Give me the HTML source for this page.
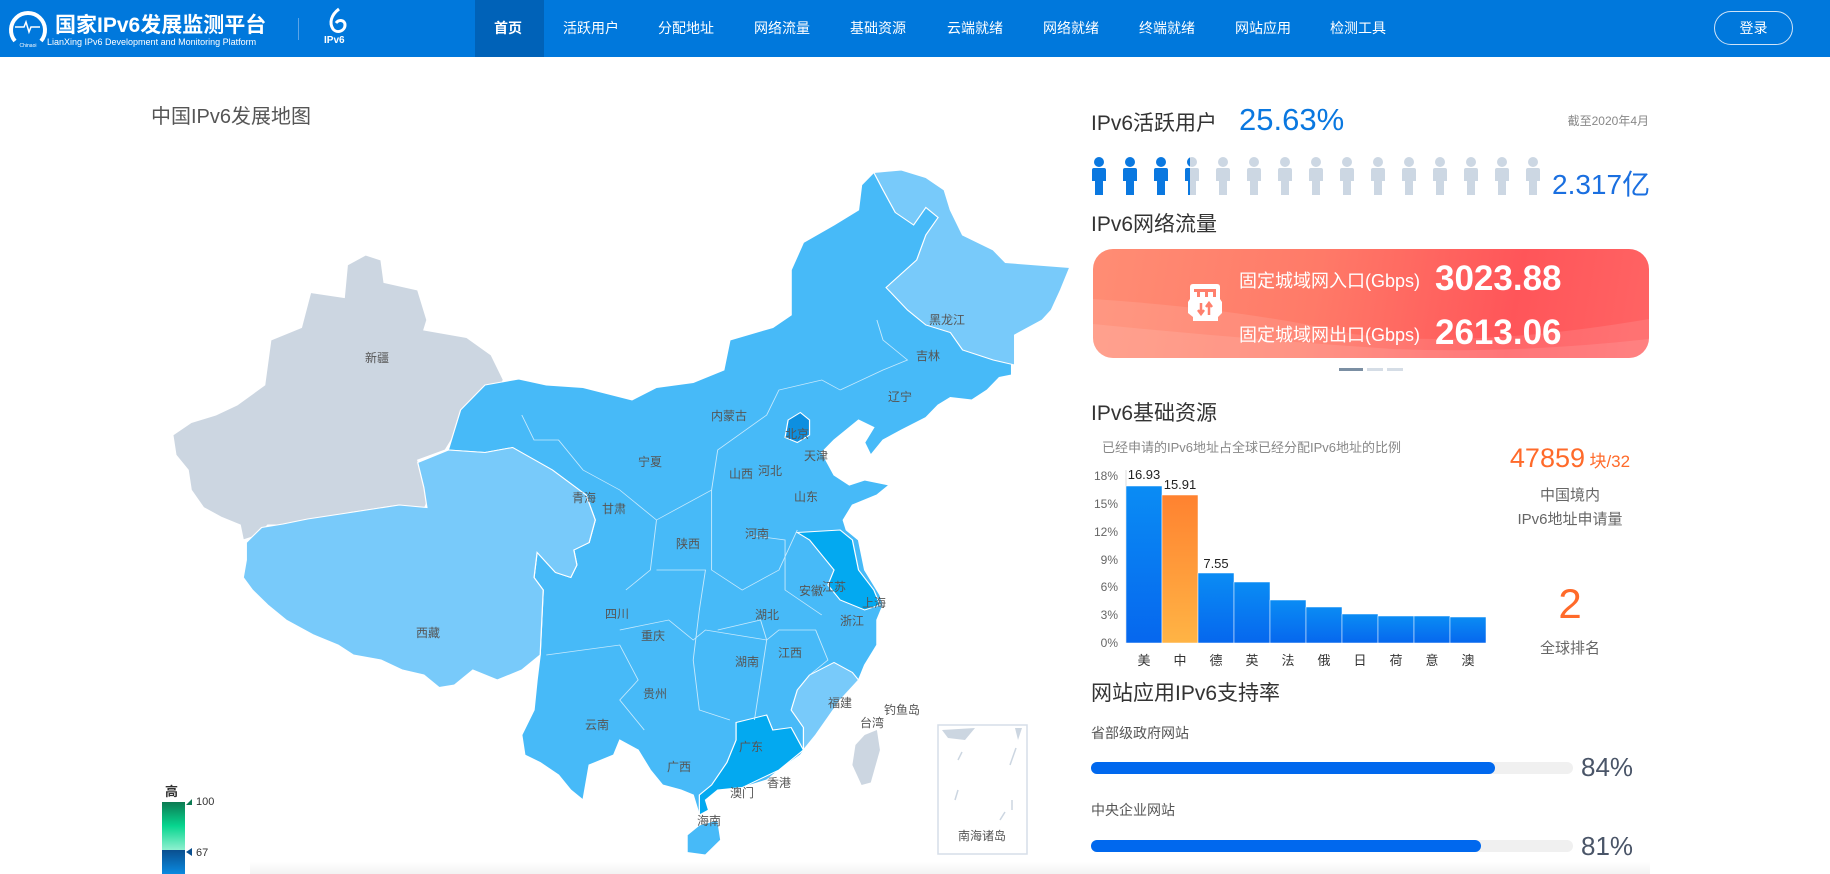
<!DOCTYPE html>
<html><head><meta charset="utf-8">
<style>
*{margin:0;padding:0;box-sizing:border-box}
body{width:1830px;height:874px;overflow:hidden;background:#fff;font-family:"Liberation Sans","Noto Sans CJK SC",sans-serif;position:relative;color:#333}
.abs{position:absolute;white-space:nowrap}
.hdr{position:absolute;left:0;top:0;width:1830px;height:57px;background:#0078dc}
.nav{position:absolute;top:0;height:57px;line-height:57px;color:#fff;font-size:14px;transform:translateX(-50%)}
.h2{font-size:21px;color:#333}
</style></head><body>
<div class="hdr"></div>
<div class="abs" style="left:475px;top:0;width:69px;height:57px;background:#0062b8"></div>
<svg class="abs" style="left:7px;top:5px" width="42" height="44" viewBox="0 0 42 44">
<path d="M8 36 A17 17 0 1 1 34 36" fill="none" stroke="#fff" stroke-width="4"/>
<path d="M8 22 H17 L19 17 L22 27 L24 22 H33" fill="none" stroke="#fff" stroke-width="1.5"/>
<text x="21" y="42" font-size="5" fill="#fff" text-anchor="middle">Chinaoi</text></svg>
<div class="abs" style="left:55px;top:9px;font-size:21px;font-weight:bold;color:#fff">国家IPv6发展监测平台</div>
<div class="abs" style="left:47px;top:37px;font-size:9px;color:#fff">LianXing IPv6 Development and Monitoring Platform</div>
<div class="abs" style="left:298px;top:18px;width:1px;height:22px;background:#5aa4e8"></div>
<svg class="abs" style="left:325px;top:7px" width="24" height="28" viewBox="0 0 24 28"><path d="M14 2 C6 8 4 16 8 22 C12 27 20 24 20 18 C20 13 14 12 11 16" fill="none" stroke="#fff" stroke-width="3"/></svg>
<div class="abs" style="left:324px;top:35px;font-size:10px;color:#fff;font-weight:bold">IPv6</div>
<div class="nav" style="left:508px;font-weight:bold">首页</div>
<div class="nav" style="left:591px">活跃用户</div>
<div class="nav" style="left:686px">分配地址</div>
<div class="nav" style="left:782px">网络流量</div>
<div class="nav" style="left:878px">基础资源</div>
<div class="nav" style="left:975px">云端就绪</div>
<div class="nav" style="left:1071px">网络就绪</div>
<div class="nav" style="left:1167px">终端就绪</div>
<div class="nav" style="left:1263px">网站应用</div>
<div class="nav" style="left:1358px">检测工具</div>
<div class="abs" style="left:1714px;top:11px;width:79px;height:34px;border:1px solid #cfe3f7;border-radius:17px;color:#fff;font-size:14px;text-align:center;line-height:32px">登录</div>

<div class="abs" style="left:151px;top:100px;font-size:20px;color:#555">中国IPv6发展地图</div>

<svg class="abs" style="left:0;top:0" width="1830" height="874">
<g transform="translate(130,90) scale(0.6122,0.5)" stroke="#fff" stroke-width="2">
<path fill="#ccd6e1" d="M70 690 100 665 140 650 175 630 220 590 230 500 280 475 295 405 350 415 355 350 385 330 410 340 415 385 470 400 485 460 480 480 550 495 590 530 610 580 600 600 575 625 545 650 525 700 515 720 470 740 480 790 490 810 480 840 440 830 360 845 325 855 285 860 250 870 225 870 210 890 185 900 180 870 150 855 120 835 100 800 95 760 75 730Z"/>
<path fill="#47baf8" d="M520 720 540 640 580 590 635 578 680 590 740 595 820 620 860 595 920 585 970 560 980 500 1050 475 1080 450 1080 360 1100 305 1150 270 1190 240 1195 190 1215 165 1260 160 1300 175 1330 200 1340 240 1360 290 1410 320 1430 345 1535 355 1520 400 1505 440 1490 460 1445 490 1440 540 1440 570 1420 575 1400 600 1375 620 1340 615 1320 630 1300 655 1260 680 1230 700 1210 730 1200 705 1215 675 1190 660 1170 680 1150 700 1130 725 1150 770 1175 790 1200 780 1240 790 1220 810 1180 830 1165 860 1170 880 1190 900 1200 960 1225 1010 1230 1030 1220 1060 1220 1110 1200 1150 1190 1180 1160 1220 1120 1290 1095 1330 1060 1360 1040 1380 1000 1395 960 1400 940 1420 945 1440 930 1450 920 1410 900 1400 870 1390 850 1360 830 1320 800 1300 790 1330 750 1350 740 1420 720 1400 700 1370 670 1345 645 1330 640 1290 660 1240 665 1180 670 1130 675 1000 660 975 665 925 695 965 720 975 730 950 725 920 750 905 760 860 745 810 690 760 625 715 580 725Z"/>
<path fill="#78cafa" d="M190 905 215 875 250 868 290 858 360 845 440 830 485 835 480 795 470 745 520 720 580 725 625 715 690 760 745 810 760 860 750 905 725 920 730 950 720 975 695 965 665 925 660 975 675 1000 670 1130 640 1160 600 1180 560 1160 530 1190 505 1195 480 1170 445 1160 410 1140 365 1130 340 1110 300 1090 255 1060 225 1030 200 1000 185 975 190 940Z"/>
<path fill="#78cafa" d="M1215 165 1260 160 1300 175 1330 200 1340 240 1360 290 1410 320 1430 345 1535 355 1520 400 1505 440 1490 460 1445 490 1445 550 1410 540 1360 520 1340 485 1300 470 1270 440 1235 395 1285 340 1300 290 1320 255 1300 235 1280 270 1250 245 1230 200Z"/>
<path fill="#78cafa" d="M1110 1170 1150 1145 1180 1165 1190 1180 1160 1220 1120 1290 1100 1320 1100 1275 1080 1240 1090 1200Z"/>
<path fill="#03a9f0" d="M990 1265 1040 1250 1050 1280 1080 1275 1100 1320 1060 1360 1000 1395 960 1400 940 1420 945 1440 930 1450 930 1410 950 1390 975 1345 990 1300Z"/>
<path fill="#03a9f0" d="M1090 885 1160 880 1180 900 1190 960 1215 1000 1225 1030 1200 1040 1160 1020 1140 990 1150 960 1130 930 1110 900Z"/>
<path fill="#0d8fe0" d="M1075 660 1095 645 1110 660 1110 690 1090 705 1070 695Z"/>
<path fill="#47baf8" d="M910 1490 930 1470 960 1460 965 1500 940 1530 910 1525Z"/>
<path fill="#ccd6e1" stroke="none" d="M1200 1290 1220 1280 1225 1320 1210 1385 1195 1390 1180 1350 1185 1310Z"/>
<g fill="none" stroke="#e6f5fe" stroke-width="1.5" opacity="0.8">
<path d="M640 650 660 700 700 700 740 760 800 800 860 860 850 960 810 1000"/>
<path d="M860 860 950 800 960 720 1040 650 1060 600 1130 580 1160 600"/>
<path d="M950 800 950 960 1000 1000 1060 960 1090 880"/>
<path d="M860 960 940 960 930 1040 920 1140 930 1240 980 1260"/>
<path d="M1040 1100 1060 1080 1120 1080 1140 1140 1110 1170"/>
<path d="M800 1080 880 1060 920 1100 940 1080 1040 1100"/>
<path d="M680 1130 800 1110 830 1180 800 1220 840 1280"/>
<path d="M1130 1050 1070 1000 1070 900 1010 890"/>
<path d="M1020 1260 1040 1100 1030 1060 960 1080"/>
<path d="M1160 600 1230 560 1270 540 1230 500 1220 460"/>
</g>
</g>
<rect x="938" y="725" width="89" height="129" fill="none" stroke="#d5dee8" stroke-width="1.5"/>
<path d="M942 730 L975 728 L965 740 L948 738Z M1015 728 L1022 728 L1018 740Z" fill="#ccd6e1"/>
<g stroke="#ccd6e1" stroke-width="1.5"><line x1="958" y1="760" x2="962" y2="752"/><line x1="1010" y1="765" x2="1016" y2="748"/><line x1="955" y1="800" x2="958" y2="790"/><line x1="1012" y1="810" x2="1012" y2="800"/><line x1="1000" y1="820" x2="1005" y2="812"/></g>
<g font-size="12" fill="#555" text-anchor="middle" font-family="Liberation Sans,Noto Sans CJK SC,sans-serif">
<text x="377" y="362">新疆</text><text x="428" y="637">西藏</text><text x="584" y="502">青海</text><text x="614" y="513">甘肃</text><text x="650" y="466">宁夏</text><text x="729" y="420">内蒙古</text><text x="797" y="438">北京</text><text x="816" y="460">天津</text><text x="741" y="478">山西</text><text x="770" y="475">河北</text><text x="806" y="501">山东</text><text x="757" y="538">河南</text><text x="688" y="548">陕西</text><text x="834" y="591">江苏</text><text x="811" y="595">安徽</text><text x="874" y="607">上海</text><text x="852" y="625">浙江</text><text x="767" y="619">湖北</text><text x="617" y="618">四川</text><text x="653" y="640">重庆</text><text x="747" y="666">湖南</text><text x="790" y="657">江西</text><text x="655" y="698">贵州</text><text x="597" y="729">云南</text><text x="679" y="771">广西</text><text x="751" y="751">广东</text><text x="840" y="707">福建</text><text x="872" y="727">台湾</text><text x="902" y="714">钓鱼岛</text><text x="779" y="787">香港</text><text x="742" y="797">澳门</text><text x="709" y="825">海南</text><text x="947" y="324">黑龙江</text><text x="928" y="360">吉林</text><text x="900" y="401">辽宁</text><text x="982" y="840">南海诸岛</text>
</g>
<defs><linearGradient id="lg" x1="0" y1="0" x2="0" y2="1"><stop offset="0" stop-color="#0c7a52"/><stop offset="0.5" stop-color="#07d68f"/><stop offset="1" stop-color="#8ff0d0"/></linearGradient>
<linearGradient id="lb" x1="0" y1="0" x2="0" y2="1"><stop offset="0" stop-color="#0a4f8f"/><stop offset="1" stop-color="#0a8ae0"/></linearGradient></defs>
<rect x="162" y="802" width="23" height="48" fill="url(#lg)"/>
<rect x="162" y="850" width="23" height="24" fill="url(#lb)"/>
<text x="165" y="796" font-size="13" font-weight="bold" fill="#333">高</text>
<path d="M186 805 L192 799 L192 805Z" fill="#0c7a52"/><text x="196" y="805" font-size="11" fill="#333">100</text>
<path d="M186 852 L192 848 L192 856Z" fill="#0a4f8f"/><text x="196" y="856" font-size="11" fill="#333">67</text>
</svg>

<!-- right panel -->
<div class="abs h2" style="left:1091px;top:107px">IPv6活跃用户</div>
<div class="abs" style="left:1239px;top:102px;font-size:31px;color:#0a78e0">25.63%</div>
<div class="abs" style="left:1545px;top:112px;font-size:12px;color:#888;width:104px;text-align:right">截至2020年4月</div>
<svg class="abs" style="left:1091px;top:156px" width="470" height="42">
<defs><clipPath id="half"><rect x="0" y="0" width="6" height="42"/></clipPath>
<g id="p"><circle cx="8" cy="6" r="5"/><path d="M1 14 Q1 12 3 12 H13 Q15 12 15 14 V25 H12 V39 H4 V25 H1Z"/></g></defs>
<g fill="#0a78e0"><use href="#p" x="0"/><use href="#p" x="31"/><use href="#p" x="62"/></g>
<g fill="#ccd7e3"><use href="#p" x="93"/><use href="#p" x="124"/><use href="#p" x="155"/><use href="#p" x="186"/><use href="#p" x="217"/><use href="#p" x="248"/><use href="#p" x="279"/><use href="#p" x="310"/><use href="#p" x="341"/><use href="#p" x="372"/><use href="#p" x="403"/><use href="#p" x="434"/></g>
<g fill="#0a78e0" clip-path="url(#half)" transform="translate(93,0)"><use href="#p"/></g>
</svg>
<div class="abs" style="left:1552px;top:163px;font-size:28px;color:#1a6fe0">2.317亿</div>
<div class="abs h2" style="left:1091px;top:208px">IPv6网络流量</div>
<div class="abs" style="left:1093px;top:249px;width:556px;height:109px;border-radius:20px;background:linear-gradient(100deg,#ff8d74 0%,#ff7a68 40%,#ff5559 75%,#ff6464 100%);overflow:hidden">
<svg width="556" height="109" style="position:absolute;left:0;top:0"><path d="M0 50 Q150 60 260 85 Q380 100 556 70 V109 H0Z" fill="#fff" opacity="0.1"/><path d="M0 75 Q150 90 300 100 Q420 105 556 90 V109 H0Z" fill="#fff" opacity="0.1"/></svg>
</div>
<svg class="abs" style="left:1187px;top:283px" width="36" height="40" viewBox="0 0 36 40">
<path d="M3 4 Q3 1 6 1 H30 Q33 1 33 4 V16 L35 19 V30 L31 34 V38 H6 V34 L1 30 V19 L3 16Z" fill="#fff"/>
<path d="M7 6 H29 V14 H26 V9 H21 V14 H18 V9 H13 V14 H10 V9 H7Z" fill="#ff806d"/>
<path d="M14 20 V30 M11 27 L14 31 L17 27 M22 32 V21 M19 24 L22 20 L25 24" stroke="#ff806d" stroke-width="2.5" fill="none"/></svg>
<div class="abs" style="left:1239px;top:267px;font-size:18px;color:#fff">固定城域网入口(Gbps)</div>
<div class="abs" style="left:1435px;top:259px;font-size:35px;font-weight:bold;color:#fff">3023.88</div>
<div class="abs" style="left:1239px;top:321px;font-size:18px;color:#fff">固定城域网出口(Gbps)</div>
<div class="abs" style="left:1435px;top:313px;font-size:35px;font-weight:bold;color:#fff">2613.06</div>
<div class="abs" style="left:1339px;top:368px;width:24px;height:3px;background:#7b8fa3"></div>
<div class="abs" style="left:1367px;top:368px;width:16px;height:3px;background:#d5dde6"></div>
<div class="abs" style="left:1387px;top:368px;width:16px;height:3px;background:#d5dde6"></div>

<div class="abs h2" style="left:1091px;top:397px">IPv6基础资源</div>
<div class="abs" style="left:1102px;top:437px;font-size:13px;color:#888">已经申请的IPv6地址占全球已经分配IPv6地址的比例</div>
<svg class="abs" style="left:1090px;top:460px" width="420" height="220" font-family="Liberation Sans,Noto Sans CJK SC,sans-serif">
<defs><linearGradient id="bb" x1="0" y1="0" x2="0" y2="1"><stop offset="0" stop-color="#0a8cf4"/><stop offset="1" stop-color="#0667ee"/></linearGradient>
<linearGradient id="bo" x1="0" y1="0" x2="0" y2="1"><stop offset="0" stop-color="#ff8230"/><stop offset="1" stop-color="#ffb445"/></linearGradient></defs>
<g font-size="12" fill="#666" text-anchor="end"><text x="28" y="20">18%</text><text x="28" y="48">15%</text><text x="28" y="76">12%</text><text x="28" y="104">9%</text><text x="28" y="131">6%</text><text x="28" y="159">3%</text><text x="28" y="187">0%</text></g>
<line x1="36" y1="10" x2="36" y2="183" stroke="#ddd"/>
<g stroke="#fff" stroke-width="0.5">
<rect x="36" y="26" width="36" height="157" fill="url(#bb)"/>
<rect x="72" y="35" width="36" height="148" fill="url(#bo)"/>
<rect x="108" y="113" width="36" height="70" fill="url(#bb)"/>
<rect x="144" y="122" width="36" height="61" fill="url(#bb)"/>
<rect x="180" y="140" width="36" height="43" fill="url(#bb)"/>
<rect x="216" y="147" width="36" height="36" fill="url(#bb)"/>
<rect x="252" y="154" width="36" height="29" fill="url(#bb)"/>
<rect x="288" y="156" width="36" height="27" fill="url(#bb)"/>
<rect x="324" y="156" width="36" height="27" fill="url(#bb)"/>
<rect x="360" y="157" width="36" height="26" fill="url(#bb)"/>
</g>
<g font-size="13" fill="#222" text-anchor="middle"><text x="54" y="19">16.93</text><text x="90" y="29">15.91</text><text x="126" y="108">7.55</text></g>
<g font-size="13" fill="#333" text-anchor="middle"><text x="54" y="205">美</text><text x="90" y="205">中</text><text x="126" y="205">德</text><text x="162" y="205">英</text><text x="198" y="205">法</text><text x="234" y="205">俄</text><text x="270" y="205">日</text><text x="306" y="205">荷</text><text x="342" y="205">意</text><text x="378" y="205">澳</text></g>
</svg>
<div class="abs" style="left:1500px;top:443px;width:140px;text-align:center;color:#ff6a2a"><span style="font-size:27px">47859</span> <span style="font-size:17px">块/32</span></div>
<div class="abs" style="left:1500px;top:484px;width:140px;text-align:center;font-size:15px;color:#666;line-height:24px">中国境内<br>IPv6地址申请量</div>
<div class="abs" style="left:1500px;top:580px;width:140px;text-align:center;font-size:42px;color:#ff6a2a">2</div>
<div class="abs" style="left:1500px;top:637px;width:140px;text-align:center;font-size:15px;color:#666">全球排名</div>

<div class="abs h2" style="left:1091px;top:677px">网站应用IPv6支持率</div>
<div class="abs" style="left:1091px;top:723px;font-size:14px;color:#555">省部级政府网站</div>
<div class="abs" style="left:1091px;top:762px;width:482px;height:12px;border-radius:6px;background:#f0f0f0"></div>
<div class="abs" style="left:1091px;top:762px;width:404px;height:12px;border-radius:6px;background:#0068ee"></div>
<div class="abs" style="left:1581px;top:752px;font-size:26px;color:#4a5568">84%</div>
<div class="abs" style="left:1091px;top:800px;font-size:14px;color:#555">中央企业网站</div>
<div class="abs" style="left:1091px;top:840px;width:482px;height:12px;border-radius:6px;background:#f0f0f0"></div>
<div class="abs" style="left:1091px;top:840px;width:390px;height:12px;border-radius:6px;background:#0068ee"></div>
<div class="abs" style="left:1581px;top:831px;font-size:26px;color:#4a5568">81%</div>
<div class="abs" style="left:250px;top:862px;width:1400px;height:12px;background:linear-gradient(rgba(240,240,240,0),#f3f3f3)"></div>
</body></html>
